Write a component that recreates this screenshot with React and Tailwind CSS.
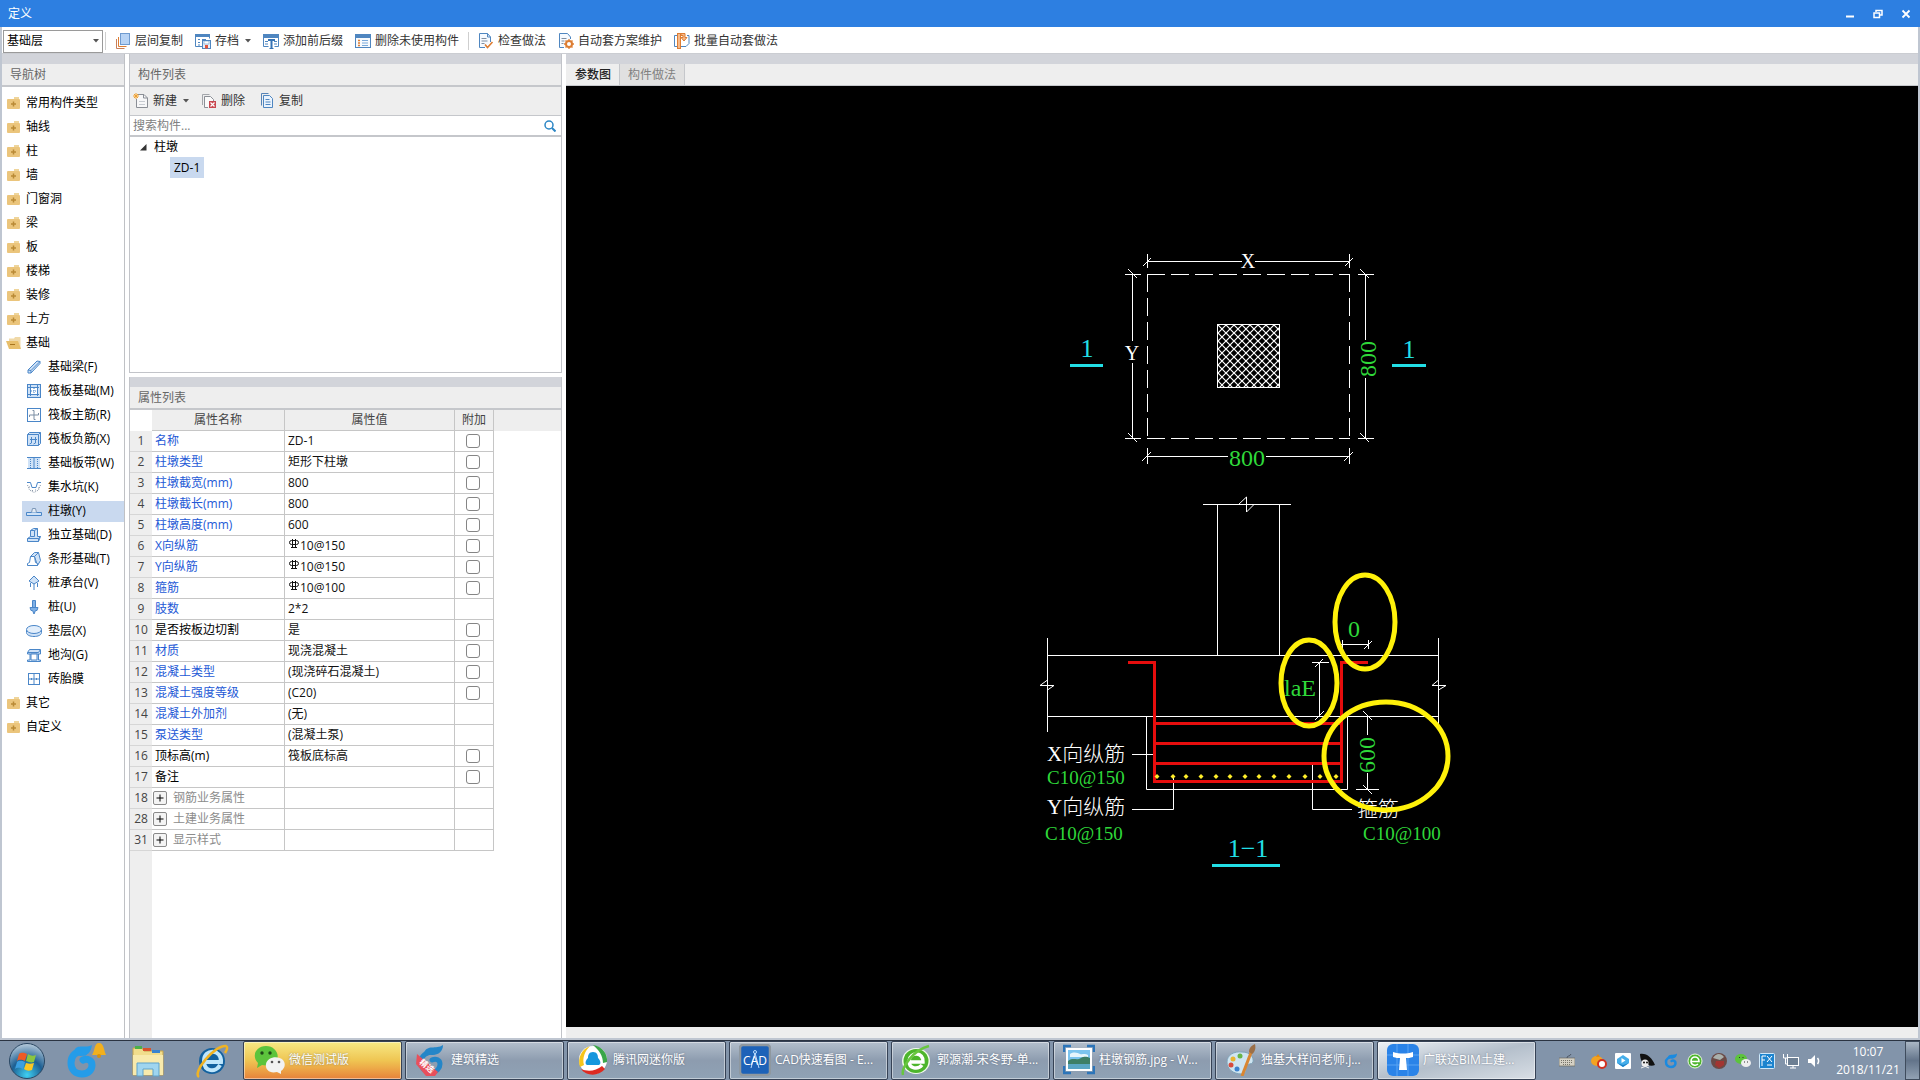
import React from "react";

const UI = "font-['Open_Sans','Noto_Sans_CJK_SC',sans-serif]";

function Svg({ size = 16, box = 16, children, className = "" }) {
  return (
    <svg width={size} height={size} viewBox={`0 0 ${box} ${box}`} fill="none" className={`shrink-0 ${className}`} aria-hidden="true">
      {children}
    </svg>
  );
}

/* ---------- toolbar icons ---------- */
const B = "#4f86c0";
const O = "#dd7d33";

const icons = {
  layers: (
    <Svg>
      <path d="M1.500 6v9.500h8" stroke="#c9805a" />
      <path d="M3.500 4v9.500h8" stroke={O} />
      <rect x="5.500" y=".5" width="9" height="11" fill="#b7d3f5" stroke="#6f9bd0" />
    </Svg>
  ),
  save: (
    <Svg>
      <path d="M.5 1.500h14v4M.5 1.500v12h7" stroke={B} />
      <rect x="0" y="1" width="15" height="3" fill={B} />
      <path d="M3 6.500h2M7 6.500h4M3 9.500h2M3 12h2" stroke={B} />
      <rect x="7.500" y="7.500" width="8" height="8" fill="#e4eefa" stroke={B} />
      <rect x="9" y="8" width="5" height="3" fill="#fff" stroke={B} strokeWidth=".5" />
      <rect x="10" y="12" width="3" height="3.500" fill="#e2533c" />
    </Svg>
  ),
  affix: (
    <Svg>
      <rect x="0" y="1" width="16" height="4" fill={B} />
      <path d="M.5 5v8.500h5M15.500 5v8.500h-4M2 8.500h3M2 11h3M11 8.500h3M11 11h3" stroke={B} />
      <path d="M5 7h7M8.500 7v8" stroke="#3573b5" strokeWidth="2" />
      <path d="M6.500 15.500h4" stroke="#3573b5" />
    </Svg>
  ),
  unused: (
    <Svg>
      <rect x=".5" y="1.500" width="15" height="13" stroke={B} fill="#f7fafd" />
      <rect x="0" y="1" width="16" height="4" fill={B} />
      <path d="M3 7.500h2M3 10h2M3 12.500h2" stroke={O} strokeWidth="1.500" />
      <path d="M7 7.500h6M7 10h6M7 12.500h6" stroke="#7aa9da" />
    </Svg>
  ),
  check: (
    <Svg>
      <path d="M7 14.500H1.500V.5h8l3 3.500v5" stroke={B} fill="#f6faff" />
      <path d="M9.500.5V4h3" stroke={B} />
      <path d="M3.500 5.500h5M3.500 8h6M3.500 10.500h3" stroke="#7f8ea1" />
      <path d="M7 11.500l2.500 3 5-5.500" stroke={O} strokeWidth="1.600" />
    </Svg>
  ),
  scheme: (
    <Svg>
      <path d="M6 14.500H1.500V.5h8l3 3.500v2" stroke={B} fill="#f6faff" />
      <path d="M3.500 5.500h5M3.500 8h3M3.500 10.500h2" stroke="#7f8ea1" />
      <circle cx="11" cy="11" r="3" stroke={O} strokeWidth="2" />
      <path d="M11 6v2M11 14v2M6 11h2M14 11h2M7.500 7.500L9 9M13 13l1.500 1.500M14.500 7.500L13 9M9 13l-1.500 1.500" stroke={O} strokeWidth="1.300" />
    </Svg>
  ),
  batch: (
    <Svg>
      <path d="M3 2.500H.5v11H3M7 13.500h5l3-3v-8h-2" stroke={B} />
      <rect x="3.500" y=".5" width="3" height="15" fill="#f6b98a" stroke={O} />
      <path d="M7 .5h4v4h2l-3 3.500-3-3.500h2v-2H7z" fill="#f6b98a" stroke={O} />
    </Svg>
  ),
  create: (
    <Svg>
      <path d="M5 1.500h6l3.500 3.500v9.500h-11V6" stroke="#8b8f96" fill="#f7f7f8" />
      <path d="M10.500 1.500V5h4" stroke="#8b8f96" />
      <path d="M6 8.500h6M6 11.500h6" stroke="#c7cbd1" />
      <path d="M3 0v6M0 3h6M1 1l4 4M5 1L1 5" stroke="#f0a02e" />
    </Svg>
  ),
  remove: (
    <Svg>
      <path d="M1.500 12V1.500h7" stroke="#a3a6ab" />
      <path d="M7 14.500H3.500v-11h6l3 3V8" stroke="#8b8f96" fill="#fafafa" />
      <rect x="8" y="8" width="7" height="7" fill="#c8474f" />
      <path d="M9.500 9.500l4 4M13.500 9.500l-4 4" stroke="#fff" strokeWidth="1.200" />
    </Svg>
  ),
  copy: (
    <Svg>
      <path d="M1.500 12.500V.5h7" stroke="#5583b6" />
      <path d="M3.500 2.500h6l3 3v9h-9z" stroke={B} fill="#eaf3fd" />
      <path d="M5.500 6.500h4M5.500 9h5M5.500 11.500h5" stroke={B} />
    </Svg>
  ),
};

/* ---------- navigation icons ---------- */
const N = "#4a86c8";
const F = "#cfe2f7";

function Folder({ open }) {
  if (open)
    return (
      <Svg>
        <path d="M3 5V3.500h5l1-1.500h5.500v11H3z" fill="#f0d9a8" />
        <path d="M0 6h12l3 8H3z" fill="#e8bf6b" />
        <path d="M4 9.500h5" stroke="#a8751e" />
      </Svg>
    );
  return (
    <Svg>
      <path d="M8 2h5v2H8z" fill="#efd59b" />
      <rect x="1" y="4" width="13" height="10" rx="1" fill="#ebc57c" />
      <path d="M7.500 6.500v5M5 9h5" stroke="#b98a35" strokeWidth="1.500" />
    </Svg>
  );
}

const navIcons = {
  beam: <Svg><path d="M2 11L11 2l3 .5v2L5 14l-3 0zM2 11l3 .5V14M5 11.500l9-9" stroke={N} fill={F} /></Svg>,
  raft: <Svg><rect x="1.500" y="1.500" width="13" height="13" stroke={N} fill={F} /><rect x="4.500" y="4.500" width="7" height="7" stroke={N} fill="#fff" /><path d="M4.500 2v12M11.500 2v12M2 4.500h12M2 11.500h12" stroke={N} strokeDasharray="2 1" /><path d="M8 5v6M5 8h6" stroke={N} strokeDasharray="1 1" /></Svg>,
  main: <Svg><rect x="1.500" y="1.500" width="13" height="13" stroke={N} /><path d="M8 3.500v9M6.500 3.500H8M8 12.500h1.500M3.500 8h9M3.500 8v2M12.500 8V6" stroke="#7d8fa5" /></Svg>,
  neg: <Svg><path d="M1.500 3.500h11v11h-11zM1.500 3.500l2-2h11v11l-2 2M12.500 3.500l2-2" stroke={N} fill={F} /><path d="M5.500 6v6l-2 1M9.500 6v6l-2 1M4 8.500h7" stroke={N} /></Svg>,
  strip: <Svg><rect x="2" y="3" width="12" height="10" fill={F} /><path d="M1 2.500h14M1 13.500h14M8 3v10" stroke={N} /><path d="M4.500 4v9M11.500 4v9" stroke={N} strokeDasharray="1 1" /></Svg>,
  pit: <Svg><path d="M1 3.500h3.500l1.500 5h4l1.500-5H15" stroke={N} /><path d="M1.500 6l2 5 4.500 2.500 4.500-2.500 2-5M3 8h1M6 11.500h1M9 11h1M12 9h1" stroke="#8a97a8" strokeDasharray="1 1" /></Svg>,
  pier: <Svg><path d="M.5 9.500h15v3H.5z" stroke={N} fill={F} /><path d="M5.500 9.500l1-4h3l1 4" stroke="#7d98b8" fill="#e3ebf5" /></Svg>,
  iso: <Svg><path d="M1.500 11.500l3-2v-6l3-2h4v8h3l-2 5h-11z" stroke={N} fill={F} /><path d="M4.500 3.500h4v6h-4M8.500 3.500l3-2M1.500 11.500h11l2-2M12.500 11.500v3" stroke={N} /></Svg>,
  bar: <Svg><path d="M8.500 1.500h4l2 8-3 5-3-9-4 0z" stroke={N} fill={F} /><path d="M1.500 14.500v-2l2-1 1-6h4l1 6 2 1v2z" stroke={N} fill="#fff" /><path d="M8.500 5.500l4-4" stroke={N} /></Svg>,
  cap: <Svg><path d="M8 1l5 5-5 3-5-3z" stroke={N} fill={F} /><path d="M4.500 8v4M8 9v6M11.500 8v4" stroke={N} /></Svg>,
  pile: <Svg><path d="M6.500 1.500h3v7h-3z" stroke={N} fill="#7fb0e6" /><path d="M4 8.500h8l-1 3H9.500L8 15l-1.500-3.500H5z" stroke={N} fill="#7fb0e6" /></Svg>,
  pad: <Svg><path d="M.5 7v2.500c0 2.500 3.500 4 7.500 4s7.500-1.500 7.500-4V7" stroke={N} fill={F} /><ellipse cx="8" cy="6.500" rx="7.500" ry="4" stroke={N} fill="#e2eefb" /></Svg>,
  ditch: <Svg><path d="M1.500 5.500h11l2-3h-11zM1.500 5.500v1.500H4v6H1.500v1.500h13V13h-2V7h2V3M12.500 7h-8.500" stroke={N} fill={F} /><path d="M5 7h6v6H5z" fill="#fff" stroke={N} /></Svg>,
  brick: <Svg><rect x="2.500" y="2.500" width="11" height="11" stroke={N} /><path d="M8 3v10M3 8h10M5.500 7v2M10.500 7v2" stroke={N} /></Svg>,
};

const groupsTop = ["常用构件类型", "轴线", "柱", "墙", "门窗洞", "梁", "板", "楼梯", "装修", "土方"];
const children = [
  ["beam", "基础梁(F)"],
  ["raft", "筏板基础(M)"],
  ["main", "筏板主筋(R)"],
  ["neg", "筏板负筋(X)"],
  ["strip", "基础板带(W)"],
  ["pit", "集水坑(K)"],
  ["pier", "柱墩(Y)"],
  ["iso", "独立基础(D)"],
  ["bar", "条形基础(T)"],
  ["cap", "桩承台(V)"],
  ["pile", "桩(U)"],
  ["pad", "垫层(X)"],
  ["ditch", "地沟(G)"],
  ["brick", "砖胎膜"],
];

function NavGroup({ label, open, children: kids }) {
  return (
    <li>
      <button className="flex h-6 w-full items-center gap-1 pl-1 text-left text-black">
        <Folder open={open} />
        {label}
      </button>
      {kids}
    </li>
  );
}

function PanelHeader({ children: c }) {
  return (
    <>
      <div className="h-[10px] shrink-0 bg-[#d2d4da]" />
      <h2 className="flex h-[23px] shrink-0 items-center border-b-2 border-[#c5c7cb] bg-[#eeeeee] pl-2 text-[#666666]">{c}</h2>
    </>
  );
}

function Caret() {
  return (
    <svg width="6" height="4" viewBox="0 0 6 4" className="shrink-0" aria-hidden="true">
      <path d="M0 0h6L3 3.500z" fill="#555" />
    </svg>
  );
}

function ToolButton({ icon, label, caret }) {
  return (
    <button className="flex h-6 items-center gap-1 px-[6px] text-[#333333]">
      {icons[icon]}
      <span className="whitespace-nowrap">{label}</span>
      {caret && <span className="pl-[2px]"><Caret /></span>}
    </button>
  );
}

function Rebar() {
  return (
    <svg width="10" height="12" viewBox="0 0 10 12" className="shrink-0" aria-label="Φ">
      <rect x=".5" y="2.500" width="9" height="4" rx="2" stroke="#111" fill="none" />
      <path d="M3.500 1v8M6.500 1v8M2 9.500h6" stroke="#111" fill="none" />
    </svg>
  );
}

const rows = [
  [1, "名称", "ZD-1", 1, "b"],
  [2, "柱墩类型", "矩形下柱墩", 1, "b"],
  [3, "柱墩截宽(mm)", "800", 1, "b"],
  [4, "柱墩截长(mm)", "800", 1, "b"],
  [5, "柱墩高度(mm)", "600", 1, "b"],
  [6, "X向纵筋", "10@150", 1, "b", true],
  [7, "Y向纵筋", "10@150", 1, "b", true],
  [8, "箍筋", "10@100", 1, "b", true],
  [9, "肢数", "2*2", 0, "b"],
  [10, "是否按板边切割", "是", 1, "k"],
  [11, "材质", "现浇混凝土", 1, "b"],
  [12, "混凝土类型", "(现浇碎石混凝土)", 1, "b"],
  [13, "混凝土强度等级", "(C20)", 1, "b"],
  [14, "混凝土外加剂", "(无)", 0, "b"],
  [15, "泵送类型", "(混凝土泵)", 0, "b"],
  [16, "顶标高(m)", "筏板底标高", 1, "k"],
  [17, "备注", "", 1, "k"],
  [18, "钢筋业务属性", "", 0, "g"],
  [28, "土建业务属性", "", 0, "g"],
  [31, "显示样式", "", 0, "g"],
];

const tone = { b: "text-[#2459d6]", k: "text-black", g: "text-[#8c8c8c]" };

function PropertyTable() {
  const line = "border-b border-r border-[#c6c6c6]";
  return (
    <table className="w-full table-fixed border-separate border-spacing-0">
      <colgroup>
        <col className="w-[22px]" />
        <col className="w-[133px]" />
        <col className="w-[170px]" />
        <col className="w-[39px]" />
        <col />
      </colgroup>
      <thead>
        <tr className="h-[21px] bg-[#eeeeee] text-[#444444]">
          <td className="bg-white p-0" />
          <th className={`p-0 font-normal ${line}`}>属性名称</th>
          <th className={`p-0 font-normal ${line}`}>属性值</th>
          <th className={`p-0 font-normal ${line}`}>附加</th>
          <td className="p-0" />
        </tr>
      </thead>
      <tbody>
        {rows.map(([n, name, value, tick, color, rebar]) => (
          <tr key={n} className="h-[21px]">
            <td className="border-b border-[#d6d6d6] bg-[#eeeeee] p-0 text-center leading-5 text-[#444444]">{n}</td>
            <td className={`p-0 leading-5 ${line} ${tone[color]}`}>
              {color === "g" ? (
                <span className="flex items-center gap-[6px] pl-px">
                  <button aria-label={`展开${name}`} className="grid h-[14px] w-[14px] place-items-center rounded-[2px] border border-[#8a8a8a] bg-[#f4f4f4]">
                    <svg width="8" height="8" viewBox="0 0 8 8"><path d="M4 .5v7M.5 4h7" stroke="#000" /></svg>
                  </button>
                  {name}
                </span>
              ) : (
                <span className="pl-[3px]">{name}</span>
              )}
            </td>
            <td className={`p-0 leading-5 text-[#111111] ${line}`}>
              <span className="flex items-center pl-[3px]">
                {rebar && <span className="px-px pb-1"><Rebar /></span>}
                {value}
              </span>
            </td>
            <td className={`p-0 ${line}`}>
              {tick ? (
                <input type="checkbox" aria-label={`附加 ${name}`} className="ml-[11px] block h-[14px] w-[14px] appearance-none rounded-[3px] border border-[#858585] bg-white" />
              ) : null}
            </td>
            <td className="p-0" />
          </tr>
        ))}
      </tbody>
    </table>
  );
}

/* ---------- parameter drawing ---------- */
const dots = [1157, 1173, 1186, 1201, 1216, 1230, 1245, 1259, 1274, 1289, 1305, 1320, 1336];

function Drawing() {
  const green = "#2fd83a";
  const cyan = "#22dfe6";
  return (
    <svg
      width="440"
      height="641"
      viewBox="1022 236 440 641"
      className="shrink-0 font-['Liberation_Serif','Noto_Sans_CJK_SC',serif] font-light"
      fill="none"
      role="img"
      aria-label="柱墩参数图"
    >
      <defs>
        <pattern id="hatch" x="1218" y="325" width="8" height="8" patternUnits="userSpaceOnUse">
          <path d="M-1 -1l10 10M9 -1l-10 10" stroke="#fff" strokeWidth="1.200" />
        </pattern>
      </defs>

      {/* plan view */}
      <g stroke="#fff">
        <path d="M1147.500 261.500H1242M1255 261.500H1349.500M1147.500 254v14M1349.500 254v14" />
        <path d="M1143 266l8-8M1345 266l8-8" />
        <path d="M1147 274.500H1350M1147 438.500H1350M1147.500 274V439M1349.500 274V439" strokeDasharray="18 6" />
        <path d="M1132.500 274V341M1132.500 363V439M1125 274.500h16M1125 438.500h16M1128 269l9 9M1128 433l9 9" />
        <path d="M1365.500 274V340M1365.500 378V439M1358 274.500h16M1358 438.500h16M1360 269l9 9M1360 433l9 9" />
        <path d="M1147.500 456.500H1228M1266 456.500H1349.500M1147.500 448v16M1349.500 448v16M1142 461l9-9M1344 461l9-9" />
        <rect x="1217.500" y="324.500" width="62" height="63" fill="url(#hatch)" />
      </g>
      <g fill="#fff" fontSize="20" textAnchor="middle">
        <text x="1248" y="268">X</text>
        <text x="1132" y="360">Y</text>
      </g>
      <g fill={green} fontSize="24" textAnchor="middle">
        <text x="1247" y="466">800</text>
        <text transform="translate(1376 359) rotate(-90)">800</text>
      </g>
      <g fill={cyan} fontSize="26" textAnchor="middle">
        <text x="1087" y="357">1</text>
        <text x="1409" y="358">1</text>
      </g>
      <path d="M1070 365.500h33M1392 365.500h34" stroke={cyan} strokeWidth="3" />

      {/* section 1-1 */}
      <g stroke="#fff">
        <path d="M1203 504.500H1291M1238.500 504.500L1246.500 497V512L1254 504.500M1217.500 504V655M1279.500 504V655" />
        <path d="M1047.500 655.500H1438.500M1047.500 716.500H1438.500" />
        <path d="M1047.500 638V732M1040 685.500H1054M1040 685.500L1047.500 680V690L1054 685.500" />
        <path d="M1438.500 638V724M1432 685.500H1446M1432 685.500L1438.500 680V690L1446 685.500" />
        <path d="M1146.500 716V789.500H1347.500V716" />
        <path d="M1132 754.500H1154M1132 809.500H1173.500V777M1312.500 764V809.500H1352" />
        <path d="M1319.500 662V717M1312 662.500h17M1315 667l8-8M1315 720l9-9" />
        <path d="M1341 644.500H1369M1368.500 640v9M1342.500 640v9M1364 649l8-8" />
        <path d="M1367.500 716V735M1367.500 773V790M1356 789.500h23M1363 711l9 9M1363 785l9 9" />
      </g>
      <g stroke="#e60d0d" strokeWidth="3">
        <path d="M1128 662.500H1154.500V781.500H1341.500V662.500H1368" />
        <path d="M1154 723.500H1341M1154 743.500H1341M1154 763.500H1341" />
      </g>
      {dots.map((x) => (
        <path key={x} d={`M${x} 774l2.500 2.500-2.500 2.500-2.500-2.500z`} fill="#ffee2a" />
      ))}
      <g fill="#fff" fontSize="21">
        <text x="1047" y="761">X向纵筋</text>
        <text x="1047" y="814">Y向纵筋</text>
        <text x="1357" y="816">箍筋</text>
      </g>
      <g fill={green} fontSize="19">
        <text x="1047" y="784">C10@150</text>
        <text x="1045" y="840">C10@150</text>
        <text x="1363" y="840">C10@100</text>
      </g>
      <g fill={green} fontSize="24" textAnchor="middle">
        <text x="1300" y="696">laE</text>
        <text x="1354" y="637">0</text>
        <text transform="translate(1375 755) rotate(-90)">600</text>
      </g>
      <text x="1248" y="857" fill={cyan} fontSize="26" textAnchor="middle">1−1</text>
      <path d="M1212 865.500h68" stroke={cyan} strokeWidth="3" />

      {/* highlight rings */}
      <g stroke="#fff10a" strokeWidth="5">
        <ellipse cx="1309" cy="683" rx="28" ry="43" />
        <ellipse cx="1365" cy="622" rx="30" ry="47" />
        <ellipse cx="1386" cy="756" rx="62" ry="54" />
      </g>
    </svg>
  );
}

/* ---------- taskbar ---------- */
function Swirl({ color }) {
  return (
    <>
      <path d="M19 8C11 8 6 12 6 18c0 7 5 10 10 10 6 0 9-4 9-8 0-4-4-6-8-4" stroke={color} strokeWidth="5" strokeLinecap="round" />
      <path d="M9 9C12 0 21 6 28 1c0 6-4 10-11 10z" fill={color} />
    </>
  );
}

const appIcons = {
  wechat: (
    <Svg size={32} box={32}>
      <path d="M4 24l1-5C-2 12 3 2 13 2s16 11 8 17c-3 2-7 3-12 2z" fill="#5cc43c" />
      <circle cx="9" cy="9" r="1.700" fill="#1f4a17" /><circle cx="17" cy="9" r="1.700" fill="#1f4a17" />
      <path d="M28 30l-4-2c-8 2-12-3-11-8 1-7 12-9 17-4 3 4 2 8-2 11z" fill="#f2f3f2" />
      <circle cx="19" cy="18" r="1.300" fill="#555" /><circle cx="26" cy="18" r="1.300" fill="#555" />
    </Svg>
  ),
  jianzhu: (
    <Svg size={32} box={32}>
      <Swirl color="#2486c8" />
      <path d="M2 10l21 18-3 4H11L1 20z" fill="#e8505c" />
      <text x="0" y="0" transform="translate(4 19) rotate(40)" fontSize="8" fontWeight="700" fill="#fff">精选</text>
    </Svg>
  ),
  tencent: (
    <Svg size={32} box={32}>
      <circle cx="16" cy="16" r="14" fill="#fff" />
      <path d="M13 2C5 5 0 14 3 23l4-2C5 14 8 7 13 2z" fill="#f5c51c" />
      <path d="M16 1c9 1 15 9 14 17l-4 1c0-7-4-13-10-18z" fill="#3aa648" />
      <path d="M4 25c5 7 17 8 24 0l-3-3c-6 5-14 6-21 3z" fill="#dd2b22" />
      <path d="M16 8c4 0 5 3 5 6 3 3 3 6 1 7H10c-2-1-2-4 1-7 0-3 1-6 5-6z" fill="#1597dd" />
    </Svg>
  ),
  cad: (
    <Svg size={32} box={32}>
      <rect x="1" y="1" width="30" height="30" rx="3" fill="#1d62b8" stroke="#8f989f" strokeWidth="2.500" />
      <path d="M12 24L16 9l4 15" stroke="#b9dcff" />
      <circle cx="16" cy="8" r="1.500" stroke="#b9dcff" />
      <text x="16" y="21" fontSize="12" fill="#fff" textAnchor="middle">CAD</text>
    </Svg>
  ),
  browser: (
    <Svg size={32} box={32}>
      <ellipse cx="15" cy="17" rx="14" ry="13" fill="#f2faee" />
      <ellipse cx="15" cy="17" rx="12.500" ry="12" fill="#4db52c" />
      <path d="M8 18h14c1-10-13-11-14-1 0 8 9 9 13 4" stroke="#fff" strokeWidth="3.500" />
      <path d="M2 31C0 24 12 6 28 2" stroke="#68c63f" strokeWidth="2.500" />
    </Svg>
  ),
  photo: (
    <Svg size={32} box={32}>
      <rect x="3" y="4" width="26" height="23" fill="#fff" />
      <rect x="5" y="6" width="22" height="19" fill="#7cc4ee" />
      <path d="M7 10c4-3 8-1 10 0s5-1 8 1v2H7z" fill="#e6f5fc" />
      <path d="M5 17c5-4 9 0 13-3 4-2 6-1 9 0v11H5z" fill="#3d7f66" />
      <path d="M5 20h22v5H5z" fill="#5aa7c4" />
      <path d="M1 8V2h7M24 2h7v6M31 22v7h-7M8 29H1v-7" stroke="#2c75b9" strokeWidth="2.500" />
    </Svg>
  ),
  paint: (
    <Svg size={32} box={32}>
      <path d="M2 18C2 11 9 7 17 8c8 0 12 5 11 10-1 3-6 1-7 4s2 7-4 8C8 30 2 25 2 18z" fill="#cfe5f1" stroke="#7fa4ba" />
      <circle cx="8" cy="15" r="2.500" fill="#e7b533" /><circle cx="15" cy="12" r="2.500" fill="#67b548" />
      <circle cx="6" cy="21" r="2.500" fill="#d84b3e" /><circle cx="12" cy="25" r="2.500" fill="#3c83cf" />
      <path d="M27 6L17 32" stroke="#d98632" strokeWidth="3" />
      <path d="M24 8c0-4 2-6 6-8 1 4 0 8-3 10z" fill="#9c7048" />
    </Svg>
  ),
  glodon: (
    <Svg size={32} box={32}>
      <rect x="0" y="0" width="32" height="32" rx="6" fill="#2a83e8" />
      <path d="M0 11h32M0 21h32M10 0v32M21 0v32" stroke="#5aa4f3" />
      <path d="M6 8c7 2 13 2 20 0v5c-3 1-5 1-7 1l1 12h-8l1-12c-2 0-4 0-7-1z" fill="#fff" />
    </Svg>
  ),
};

const tasks = [
  ["wechat", "微信测试版"],
  ["jianzhu", "建筑精选"],
  ["tencent", "腾讯网迷你版"],
  ["cad", "CAD快速看图 - E..."],
  ["browser", "郭源潮-宋冬野-单..."],
  ["photo", "柱墩钢筋.jpg - W..."],
  ["paint", "独基大样问老师.j..."],
  ["glodon", "广联达BIM土建..."],
];

const tray = [
  ["下载", <Svg key="d"><ellipse cx="6" cy="8" rx="6" ry="5" fill="#f3a321" /><path d="M5 4l2-3 2 3" fill="#e58a12" /><circle cx="11" cy="11" r="4" fill="#fff" stroke="#d2301f" strokeWidth="2" /></Svg>],
  ["视频", <Svg key="v"><rect width="16" height="16" rx="1" fill="#fff" /><path d="M8 2l6 4v4l-6 4-6-4V6z" fill="#45aeea" /><path d="M2 10l6 4 6-4-6 2z" fill="#1d83c9" /><path d="M6.500 5l4 2.500-4 2.500z" fill="#fff" /></Svg>],
  ["海盗", <Svg key="p"><path d="M1 1c7-1 12 4 15 11-5 2-8-1-10-1-3 0-5-6-5-10z" fill="#111" /><circle cx="6" cy="10" r="3.500" fill="#eee" /><circle cx="5" cy="9.500" r="1" fill="#111" /><circle cx="8" cy="9.500" r="1" fill="#111" /><path d="M2 15l8-3M3 12l7 3" stroke="#eee" /></Svg>],
  ["G+", <Svg key="g" box={32}><Swirl color="#1a8ae0" /></Svg>],
  ["浏览器", <Svg key="b"><circle cx="8" cy="8" r="7" fill="#4db52c" stroke="#e8f6e2" /><path d="M4 8.500h8c0-6-8-6-8 0 0 4 5 4.500 7 2.500" stroke="#fff" strokeWidth="1.600" /></Svg>],
  ["头像", <Svg key="a"><circle cx="8" cy="8" r="8" fill="#6b4a46" /><path d="M2 5c3-5 8-5 11-1l-4 3z" fill="#a9b0ac" /><path d="M5 8h8v4l-5 3-4-3z" fill="#a23532" /></Svg>],
  ["微信", <Svg key="w"><ellipse cx="6" cy="6" rx="6" ry="5" fill="#5cc43c" /><ellipse cx="11" cy="10" rx="5" ry="4" fill="#eee" /><path d="M4 4.500h1M7.500 4.500h1M9 9h1M12 9h1" stroke="#333" /></Svg>],
  ["显卡", <Svg key="x"><rect x=".5" y=".5" width="15" height="15" rx="1" fill="#1c84cf" stroke="#cfe9fb" /><path d="M3 13V3h4M3 7h3M8 3l5 6M13 3L8 9M8 12h5" stroke="#fff" /></Svg>],
  ["网络", <Svg key="n"><rect x="4.500" y="4.500" width="11" height="8" fill="#6d7f93" stroke="#fff" /><path d="M7 15h6M10 13v2M.5 1v4h4V1M2.500 5v6h2" stroke="#fff" /></Svg>],
  ["音量", <Svg key="s"><path d="M1 6h3l4-4v12l-4-4H1z" fill="#fff" /><path d="M10.500 5c1.500 2 1.500 4 0 6" stroke="#fff" strokeWidth="1.500" /></Svg>],
];

function Taskbar() {
  return (
    <footer className="flex h-10 shrink-0 items-stretch border-t border-[#2b3442] bg-[#8294aa] text-white">
      <nav className="flex items-center pl-2">
        <button aria-label="开始" className="w-14">
          <svg width="38" height="38" viewBox="0 0 38 38" aria-hidden="true">
            <defs>
              <radialGradient id="orb" cx=".5" cy=".9" r=".9">
                <stop offset="0" stopColor="#3fd0f2" /><stop offset=".5" stopColor="#1c5f93" /><stop offset="1" stopColor="#b9cbdb" />
              </radialGradient>
            </defs>
            <circle cx="19" cy="19" r="17.500" fill="url(#orb)" stroke="#2a4763" />
            <path d="M11 12c3-2 5-1 8 0l-2 7c-3-1-5-2-8 0z" fill="#ee5a24" />
            <path d="M20 12c3 2 5 2 8 1l-2 7c-3 1-5 0-8-1z" fill="#8bc53f" />
            <path d="M9 20c3-2 5-1 8 0l-2 7c-3-1-5-2-8 0z" fill="#3b9fe0" />
            <path d="M18 21c3 1 5 1 8 0l-2 7c-3 1-5 1-8-1z" fill="#fbc722" />
          </svg>
        </button>
        <button aria-label="广联达G+" className="w-[67px]">
          <svg width="44" height="36" viewBox="0 0 44 36" fill="none" aria-hidden="true">
            <path d="M20 9C11 8 7 13 7 20c0 7 5 11 11 11 7 0 10-5 10-9 0-5-5-7-9-5" stroke="#259ce8" strokeWidth="7" strokeLinecap="round" />
            <path d="M10 8C13 0 22 6 28 2c-1 7-4 11-12 11z" fill="#259ce8" />
            <path d="M35 0c5 0 5 8 7 12H28c3-4 2-12 7-12z" fill="#f2b01e" />
            <circle cx="35" cy="13" r="2" fill="#d8920e" />
          </svg>
        </button>
        <button aria-label="资源管理器" className="w-[63px]">
          <svg width="36" height="34" viewBox="0 0 36 34" fill="none" aria-hidden="true">
            <path d="M2 4h9l2 3h19v24H2z" fill="#f1dd8c" stroke="#c5a44c" />
            <path d="M4 2h7v3H4z" fill="#4bb04a" /><path d="M12 4h8v3h-8z" fill="#d9532d" /><path d="M21 6h8v3h-8z" fill="#3a84cf" />
            <path d="M2 11h30v20H2z" fill="#f8eaac" />
            <path d="M6 32V19h22v13h-6v-7H12v7z" fill="#9fd5ef" stroke="#5ea3cb" />
          </svg>
        </button>
        <button aria-label="Internet Explorer" className="w-[49px]">
          <svg width="36" height="36" viewBox="0 0 36 36" fill="none" aria-hidden="true">
            <circle cx="18" cy="18" r="13" fill="#12619f" />
            <path d="M10 19h17c1-13-17-14-17-1 0 11 12 12 16 4" stroke="#bfe6fb" strokeWidth="4" />
            <path d="M5 34C-2 30 20 2 32 3c2 1 1 4-1 7" stroke="#f0b323" strokeWidth="2.500" />
          </svg>
        </button>
      </nav>
      <ul className="flex gap-[3px]">
        {tasks.map(([icon, label], i) => (
          <li key={label} className="flex">
            <button
              className={`flex w-[159px] items-center gap-1 rounded-[2px] border border-[#364255] pb-px pl-[9px] text-left shadow-[inset_0_0_0_1px_rgba(255,255,255,0.45)] ${
                i === 0
                  ? "bg-linear-to-b from-[#f6e983] via-[#efc552] to-[#e6813a]"
                  : i === 7
                  ? "bg-linear-to-br from-[#edf1f5] via-[#b4bfcb] to-[#d8dee5]"
                  : "bg-linear-to-b from-[#b3bfcc] via-[#8d9caf] to-[#8fa2b5]"
              }`}
            >
              {appIcons[icon]}
              <span className="whitespace-nowrap [text-shadow:0_0_2px_rgba(60,70,90,0.6)]">{label}</span>
            </button>
          </li>
        ))}
      </ul>
      <div className="ml-auto flex items-center gap-2 pr-2">
        <button aria-label="输入法" className="mr-2">
          <Svg>
            <rect x="0" y="5" width="16" height="8" fill="#d4d0c4" stroke="#6c6a60" strokeWidth=".7" />
            <path d="M2 7.500h12M2 9.500h12M4 11.500h8" stroke="#77756b" strokeDasharray="1 1" />
            <path d="M8 5c0-3 3-1 4-4" stroke="#4c5562" />
          </Svg>
        </button>
        {tray.map(([label, icon]) => (
          <button key={label} aria-label={label}>{icon}</button>
        ))}
      </div>
      <time className="flex w-[74px] flex-col items-center justify-center leading-[18px]">
        <span>10:07</span>
        <span>2018/11/21</span>
      </time>
      <button aria-label="显示桌面" className="w-[15px] border border-[#3f4c5d] bg-linear-to-b from-[#aab7c5] via-[#63748a] to-[#92a2b4]" />
    </footer>
  );
}

export default function App() {
  return (
    <div className={`flex h-screen flex-col overflow-hidden bg-white text-[12px] leading-4 ${UI}`}>
      <header className="flex h-[27px] shrink-0 items-center bg-[#2d7fe1] pl-2 text-white">
        <h1>定义</h1>
        <div className="ml-auto flex gap-3 pr-[6px]">
          <button aria-label="最小化"><Svg><path d="M4 10.500h8" stroke="#fff" strokeWidth="2" /></Svg></button>
          <button aria-label="还原"><Svg><path d="M6 6V4.500h6v4.500h-2" stroke="#fff" strokeWidth="1.500" /><rect x="4" y="7" width="5.500" height="4.500" stroke="#fff" strokeWidth="1.500" /></Svg></button>
          <button aria-label="关闭"><Svg><path d="M4.500 4.500l7 7M11.500 4.500l-7 7" stroke="#fff" strokeWidth="1.800" /></Svg></button>
        </div>
      </header>

      <div className="flex min-h-0 flex-1 flex-col border-x-2 border-b-2 border-[#bfc6d1]">
        <div role="toolbar" className="flex h-[27px] shrink-0 items-center border-b border-[#cbcdd2] bg-white pt-[2px] pl-px">
          <div className="relative mr-[2px]">
            <select aria-label="楼层" className="h-[23px] w-[100px] appearance-none border border-[#9a9a9a] bg-white pl-[3px] text-black">
              <option>基础层</option>
            </select>
            <span className="pointer-events-none absolute top-[9px] right-1 leading-none"><svg width="6" height="4" viewBox="0 0 6 4"><path d="M0 0h6L3 3.500z" fill="#555" /></svg></span>
          </div>
          <span className="mr-[3px] h-[18px] w-px bg-[#cfcfcf]" />
          <ToolButton icon="layers" label="层间复制" />
          <ToolButton icon="save" label="存档" caret />
          <ToolButton icon="affix" label="添加前后缀" />
          <ToolButton icon="unused" label="删除未使用构件" />
          <span className="mx-[3px] h-[18px] w-px bg-[#cfcfcf]" />
          <ToolButton icon="check" label="检查做法" />
          <ToolButton icon="scheme" label="自动套方案维护" />
          <ToolButton icon="batch" label="批量自动套做法" />
        </div>

        <main className="flex min-h-0 flex-1 gap-1">
          <nav className="flex w-[123px] shrink-0 flex-col border-r border-[#bfc1c5]">
            <PanelHeader>导航树</PanelHeader>
            <ul className="pt-1">
              {groupsTop.map((g) => <NavGroup key={g} label={g} />)}
              <NavGroup label="基础" open>
                <ul>
                  {children.map(([icon, label]) => (
                    <li key={label} className="flex h-6 items-center pl-5">
                      <button className={`flex h-[21px] flex-1 items-center gap-[6px] pl-1 text-left whitespace-nowrap text-black ${icon === "pier" ? "bg-[#c9d9ef]" : ""}`}>
                        {navIcons[icon]}
                        {label}
                      </button>
                    </li>
                  ))}
                </ul>
              </NavGroup>
              <NavGroup label="其它" />
              <NavGroup label="自定义" />
            </ul>
          </nav>

          <div className="flex w-[433px] shrink-0 flex-col gap-1">
            <section className="flex h-[319px] shrink-0 flex-col border-x border-b border-[#c2c4c9]">
              <PanelHeader>构件列表</PanelHeader>
              <div role="toolbar" className="flex h-7 shrink-0 items-center bg-[#eeeeee]">
                <button className="flex items-center gap-1 pl-[3px] text-[#333333]">{icons.create}<span>新建</span><span className="pl-[2px]"><Caret /></span></button>
                <button className="flex items-center gap-1 pl-3 text-[#333333]">{icons.remove}<span>删除</span></button>
                <button className="flex items-center gap-[3px] pl-[15px] text-[#333333]">{icons.copy}<span>复制</span></button>
              </div>
              <div className="flex h-[22px] shrink-0 items-center border-t border-b-2 border-[#c5c7cb] bg-white pr-[5px]">
                <input aria-label="搜索构件" placeholder="搜索构件..." className="min-w-0 flex-1 bg-transparent pl-[3px] outline-none placeholder:text-[#808080]" />
                <button aria-label="搜索"><Svg size={12} box={12}><circle cx="5" cy="5" r="4" stroke="#2b86c5" strokeWidth="1.500" /><path d="M8 8l3.500 3.500" stroke="#2b86c5" strokeWidth="2" /></Svg></button>
              </div>
              <ul className="text-black">
                <li>
                  <button className="flex h-5 items-center gap-[7px] pl-[10px]">
                    <svg width="7" height="7" viewBox="0 0 7 7"><path d="M6.500 0v6.500H0z" fill="#333" /></svg>
                    柱墩
                  </button>
                  <ul className="pl-10">
                    <li><button className="h-[21px] bg-[#c9d9ef] px-1">ZD-1</button></li>
                  </ul>
                </li>
              </ul>
            </section>
            <section className="flex min-h-0 flex-1 flex-col border-x border-[#c2c4c9]">
              <PanelHeader>属性列表</PanelHeader>
              <PropertyTable />
              <div className="w-[22px] flex-1 bg-[#eeeeee]" />
            </section>
          </div>

          <section className="flex min-w-0 flex-1 flex-col">
            <div className="h-[10px] shrink-0 bg-[#d2d4da]" />
            <div role="tablist" className="flex h-[22px] shrink-0 border-b border-[#c5c7cb] bg-[#eeeeee] pl-px">
              <button role="tab" aria-selected="true" className="border-r border-[#c5c7cb] px-2 font-medium text-[#222222]">参数图</button>
              <button role="tab" aria-selected="false" className="border-r border-[#c5c7cb] bg-[#e0e0e0] px-2 text-[#808080]">构件做法</button>
            </div>
            <div className="flex min-h-0 flex-1 items-center justify-center bg-black">
              <Drawing />
            </div>
            <div className="h-[11px] shrink-0 bg-[#eeeeee]" />
          </section>
        </main>
      </div>

      <Taskbar />
    </div>
  );
}
